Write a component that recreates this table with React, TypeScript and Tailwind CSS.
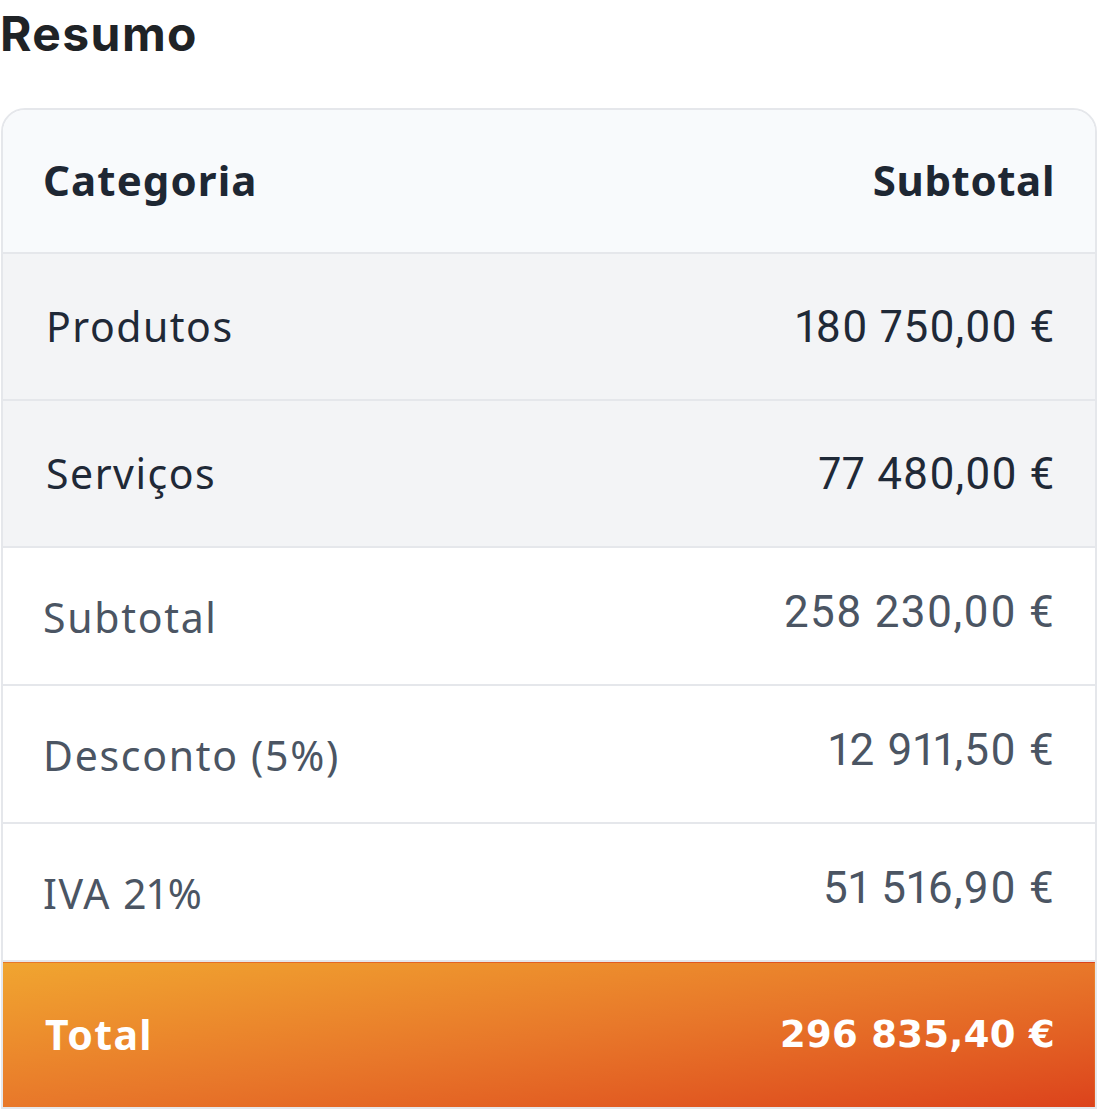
const rows = [
  { label: "Produtos", value: "180 750,00 €" },
  { label: "Serviços", value: "77 480,00 €" },
];

const summary = [
  { label: "Subtotal", value: "258 230,00 €" },
  { label: "Desconto (5%)", value: "12 911,50 €" },
  { label: "IVA 21%", value: "51 516,90 €" },
];

export default function App() {
  return (
    <div className="bg-white w-[1098px] h-[1110px] overflow-hidden font-['Inter',sans-serif] proportional-nums">
      <h2 className="text-[48px] leading-[70px] font-bold text-[#1f2326] -mt-[1px] tracking-[1.4px]">
        Resumo
      </h2>

      <div className="mt-[39px] mx-px border-2 border-[#e5e7eb] rounded-t-[24px] overflow-hidden">
        <table className="w-full border-collapse">
          <thead>
            <tr className="bg-[#f8fafc] h-[143px] font-['Noto_Sans',sans-serif] text-[#1e2733]">
              <th className="text-left pl-[40px] text-[42px] font-bold tracking-[1.1px] pb-[3px]">Categoria</th>
              <th className="text-right pr-[40px] text-[42px] font-bold tracking-[0.6px] pb-[3px]">Subtotal</th>
            </tr>
          </thead>
          <tbody>
            {rows.map((r) => (
              <tr key={r.label} className="bg-[#f3f4f6] h-[147px] border-t-2 border-[#e5e7eb] text-[#1f2937]">
                <td className="pl-[43px] text-[41px] tracking-[1.5px] font-['Noto_Sans',sans-serif]">{r.label}</td>
                <td className="pr-[40px] text-right text-[44px] tracking-[0.8px] font-['Roboto',sans-serif]">{r.value}</td>
              </tr>
            ))}
            {summary.map((r) => (
              <tr key={r.label} className="bg-white h-[138px] border-t-2 border-[#e5e7eb] text-[#4b5563]">
                <td className="pl-[40px] text-[41px] tracking-[1.7px] font-['Noto_Sans',sans-serif] pt-[4px]">{r.label}</td>
                <td className="pr-[40px] text-right text-[44px] tracking-[1.2px] font-['Roboto',sans-serif] pb-[8px]">{r.value}</td>
              </tr>
            ))}
            <tr className="h-[146px] border-t-2 border-[#e5e7eb] text-white bg-gradient-to-br from-[#f0a530] via-[#e8782a] to-[#dc421c]">
              <td className="pl-[42px] text-[41px] tracking-[1.4px] font-bold font-['Noto_Sans',sans-serif]">Total</td>
              <td className="pr-[40px] text-right text-[37px] tracking-[0.3px] font-bold font-['DejaVu_Sans',sans-serif]">296 835,40 €</td>
            </tr>
          </tbody>
        </table>
      </div>
    </div>
  );
}
